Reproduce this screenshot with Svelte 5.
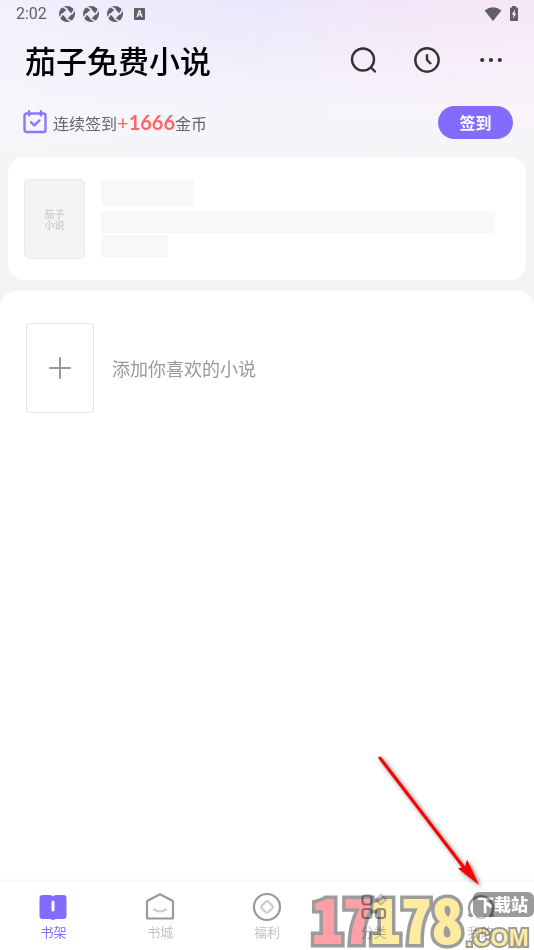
<script lang="ts">
	let active = $state('shelf');

	const tabs = [
		{ id: 'shelf', label: '书架' },
		{ id: 'store', label: '书城' },
		{ id: 'welfare', label: '福利' },
		{ id: 'category', label: '分类' },
		{ id: 'mine', label: '我的' }
	];
</script>

<div class="page">
	<header class="top">
		<div class="status">
			<span class="time">2:02</span>
			{#each [1, 2, 3] as n (n)}
				<svg class="shutter" width="16" height="16" viewBox="0 0 16 16">
					<circle cx="8" cy="8" r="8" fill="#625f68" />
					<path d="M8 3 13 8 8 13 3 8Z" fill="#edebfb" />
					<path d="M8.500 3.500 4 .8M12.500 8.500 15.200 4M7.500 12.500 12 15.200M3.500 7.500.8 12" stroke="#edebfb" stroke-width="1.500" />
				</svg>
			{/each}
			<span class="badge">A</span>
			<svg class="wifi" width="18" height="14" viewBox="0 0 18 14">
				<path d="M9 14 .5 3.4Q9-3 17.5 3.4Z" fill="#625f68" />
			</svg>
			<svg width="10" height="15" viewBox="0 0 10 15">
				<path d="M3 0h4v1.5h1q1 0 1 1V14q0 1-1 1H2q-1 0-1-1V2.500q0-1 1-1h1Z" fill="#625f68" />
				<path d="M6 3.500 2.800 8.500h1.900L4 12.500l3.300-5H5.400Z" fill="#fff" />
			</svg>
		</div>

		<div class="title-row">
			<h1>茄子免费小说</h1>
			<button class="icon" aria-label="搜索">
				<svg width="26" height="26" viewBox="0 0 26 26" fill="none" stroke="#333" stroke-width="2.400" stroke-linecap="round">
					<circle cx="13" cy="12.500" r="11" />
					<path d="m21 20.500 4 4" />
				</svg>
			</button>
			<button class="icon" aria-label="阅读历史">
				<svg width="26" height="26" viewBox="0 0 26 26" fill="none" stroke="#333" stroke-width="2.400" stroke-linecap="round">
					<circle cx="13" cy="13" r="11.700" />
					<path d="M13 7.200v5.600l4 4.200" stroke-linecap="butt" />
				</svg>
			</button>
			<button class="icon" aria-label="更多">
				<svg width="26" height="26" viewBox="0 0 26 26" fill="#333">
					<circle cx="4.200" cy="13" r="2.100" />
					<circle cx="13" cy="13" r="2.100" />
					<circle cx="21.800" cy="13" r="2.100" />
				</svg>
			</button>
		</div>

		<div class="sign-row">
			<svg width="24" height="24" viewBox="0 0 24 24" fill="none" stroke="#8f75ff" stroke-width="2.400" stroke-linecap="round" stroke-linejoin="round">
				<rect x="1.500" y="3.500" width="21" height="18.500" rx="2" />
				<path d="M6 1.300v4M18 1.300v4M8 12.200l3.300 3.200 5.200-5" />
			</svg>
			<p>连续签到<span class="plus">+</span><strong>1666</strong>金币</p>
			<button class="sign">签到</button>
		</div>
	</header>

	<section class="card">
		<div class="cover">茄子<br />小说</div>
		<div class="lines">
			<div class="line name"></div>
			<div class="line"></div>
			<div class="line short"></div>
		</div>
	</section>

	<main class="sheet">
		<button class="add">
			<span class="box">
				<svg width="22" height="22" viewBox="0 0 22 22" stroke="#999" stroke-width="2" stroke-linecap="round">
					<path d="M11 1v20M1 11h20" />
				</svg>
			</span>
			添加你喜欢的小说
		</button>
	</main>

	<nav>
		{#each tabs as tab (tab.id)}
			<button class="tab" class:active={active === tab.id} onclick={() => (active = tab.id)}>
				<svg width="30" height="30" viewBox="0 0 30 30" fill="none" stroke="#999" stroke-width="2.200" stroke-linejoin="round" stroke-linecap="round">
					{#if tab.id === 'shelf'}
						<path d="M4.500 3H11q2.500 0 4 1.200Q16.500 3 19 3h6.500Q28.500 3 28.500 6v18q0 3-3 3H19q-2 0-4 1.200Q13 27 11 27H4.500q-3 0-3-3V6q0-3 3-3Z" fill="#846bff" stroke="none" />
						<path d="M15 10v8" stroke="#fff" stroke-width="3" />
					{:else if tab.id === 'store'}
						<path d="M15 2.300 27 8.500q1 .6 1 1.700V25q0 1.500-1.500 1.500h-23Q2 26.500 2 25V10.200Q2 9.100 3 8.500Z" />
						<path d="M9 17.500q6 3.600 12 0" stroke="#ccc" />
					{:else if tab.id === 'welfare'}
						<circle cx="15" cy="15" r="13" />
						<path d="m13.500 10-3.500 3.500q-1.500 1.500 0 3l3.500 3.500q1.500 1.500 3 0l3.500-3.500q1.500-1.500 0-3L16.500 10q-1.500-1.500-3 0Z" stroke="#ccc" />
					{:else if tab.id === 'category'}
						<rect x="3.500" y="3.500" width="9" height="9" rx="2.500" />
						<path d="M22 2.500 27 7.500 22 12.500 17 7.500Z" stroke="#ccc" />
						<rect x="3.500" y="17" width="9" height="9" rx="2.500" />
						<rect x="17" y="17" width="9" height="9" rx="2.500" />
					{:else}
						<path d="M6 24a12 12 0 1 1 18 0M6 24q-2 .5-3-1M24 24q2 .5 3-1" />
						<path d="M11 25q4 2.500 8 0" stroke="#ccc" />
					{/if}
				</svg>
				{tab.label}
			</button>
		{/each}
	</nav>

	<!-- site mark over the right end of the tab bar -->
	<svg class="mark" width="226" height="64" viewBox="0 0 226 64">
		<text class="digits pink" x="4" y="58">17</text>
		<text class="digits" x="62" y="58">178</text>
		<text class="com" x="158" y="60">.COM</text>
		<rect x="165" y="6" width="61" height="25" rx="6" fill="#9b9b9b" />
		<text class="station" x="169" y="25">下载站</text>
	</svg>

	<svg class="arrow" width="110" height="136" viewBox="0 0 110 136">
		<path d="M7 5 92 116" stroke="#f00" stroke-width="3" stroke-linecap="round" />
		<path d="M106 132 85 115.500l7-2 2-7Z" fill="#f00" />
	</svg>
</div>

<style>
	:global(body) {
		margin: 0;
	}

	.page {
		position: relative;
		display: flex;
		flex-direction: column;
		min-height: 100vh;
		overflow: hidden;
		background:
			linear-gradient(to bottom, rgba(244, 244, 245, 0), rgba(249, 248, 251, 0.8) 110px, #f4f4f4 195px),
			linear-gradient(100deg, #f2f0fd, #eae7fb 35%, #f5e6f7 70%, #f9e8f2);
		font-family: 'Noto Sans CJK SC', sans-serif;
	}

	button {
		padding: 0;
		border: none;
		background: none;
		font-family: inherit;
		cursor: pointer;
	}

	svg {
		display: block;
		flex: none;
	}

	/* status bar */
	.status {
		display: flex;
		align-items: center;
		height: 27px;
		padding: 0 15px 0 16px;
		color: #625f68;
	}

	.time {
		width: 34px;
		margin-right: 9px;
		font: 16px Roboto, sans-serif;
	}

	.shutter {
		margin-right: 8px;
	}

	.badge {
		width: 11px;
		margin-left: 3px;
		border-radius: 1px;
		background: #625f68;
		color: #fff;
		font: bold 9px/12px Roboto, sans-serif;
		text-align: center;
	}

	.wifi {
		margin: 0 7px 0 auto;
	}

	/* header */
	.title-row {
		display: flex;
		align-items: center;
		gap: 38px;
		height: 66px;
		padding: 0 30px 0 25px;
	}

	h1 {
		margin: 0 auto 0 0;
		color: #000;
		font-size: 31px;
		font-weight: 500;
		line-height: 40px;
		white-space: nowrap;
	}

	.sign-row {
		display: flex;
		align-items: center;
		height: 58px;
		margin-bottom: 6px;
		padding: 0 21px 0 23px;
	}

	.sign-row p {
		margin: 0 auto 0 6px;
		color: #666;
		font-size: 16px;
		line-height: 24px;
	}

	.plus,
	strong {
		color: #ff6565;
		font-family: Lato, sans-serif;
		font-size: 20px;
	}

	.sign {
		width: 75px;
		border-radius: 17px;
		background: #846bff;
		color: #fff;
		font-size: 16px;
		font-weight: 700;
		line-height: 33px;
	}

	/* loading card */
	.card {
		display: flex;
		gap: 16px;
		margin: 0 8px 11px;
		padding: 22px 31px 21px 16px;
		border-radius: 16px;
		background: #fff;
	}

	.cover {
		box-sizing: border-box;
		flex: none;
		width: 61px;
		height: 80px;
		padding-top: 28px;
		border: 1px solid #ebebeb;
		border-radius: 5px;
		background: #f4f4f4;
		color: #d2d2d2;
		font-size: 10px;
		font-weight: 700;
		line-height: 11px;
		text-align: center;
	}

	.lines {
		flex: 1;
		padding-top: 1px;
	}

	.line {
		height: 22px;
		margin-bottom: 2px;
		background: #f8f8f8;
	}

	.name {
		width: 93px;
		height: 26px;
		margin-bottom: 5px;
	}

	.short {
		width: 67px;
	}

	/* shelf */
	.sheet {
		flex: 1;
		padding: 32px 26px;
		border-radius: 16px 16px 0 0;
		background: #fff;
	}

	.add {
		display: flex;
		align-items: center;
		gap: 18px;
		color: #999;
		font-size: 18px;
	}

	.box {
		display: flex;
		align-items: center;
		justify-content: center;
		width: 66px;
		height: 88px;
		border: 1px solid #e4e4e4;
		border-radius: 4px;
	}

	/* tab bar */
	nav {
		display: flex;
		height: 68px;
		background: #fff;
		box-shadow: 0 -1px 4px rgba(0, 0, 0, 0.06);
	}

	.tab {
		display: flex;
		flex: 1;
		flex-direction: column;
		align-items: center;
		padding-top: 10px;
		color: #c2c2c6;
		font-size: 13px;
		line-height: 20px;
	}

	.tab.active {
		color: #846bff;
	}

	/* overlays */
	.mark,
	.arrow {
		position: absolute;
		pointer-events: none;
	}

	/* the tabs stay visible through the mark */
	.mark {
		right: 0;
		bottom: 0;
		mix-blend-mode: multiply;
	}

	.arrow {
		right: 51px;
		bottom: 61px;
		fill: none;
		filter: drop-shadow(2px 2px 2px rgba(0, 0, 0, 0.55));
	}

	.digits,
	.com {
		fill: #fdeb9f;
		stroke: #9c9c9c;
		stroke-linejoin: miter;
		paint-order: stroke;
		font-weight: 700;
	}

	.digits {
		font-family: 'Noto Sans CJK SC', sans-serif;
		font-feature-settings: 'hwid';
		font-size: 62px;
		font-weight: 900;
		stroke-width: 7px;
	}

	.pink {
		fill: #ffa0a6;
	}

	.com {
		font-family: 'Liberation Sans', sans-serif;
		font-size: 24px;
		stroke-width: 4px;
	}

	.station {
		fill: #fff;
		font-size: 17px;
		font-weight: 900;
	}
</style>
